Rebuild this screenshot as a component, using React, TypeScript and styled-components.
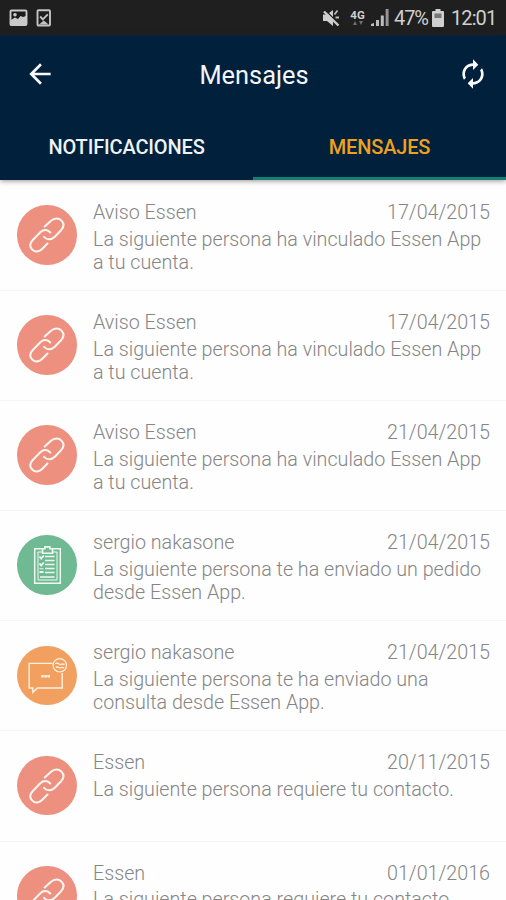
import React from "react";
import styled, { createGlobalStyle } from "styled-components";

const GlobalStyle = createGlobalStyle`
  * { box-sizing: border-box; }
  html, body { margin: 0; background: #fefefe; }
  body { font-family: Roboto, sans-serif; overflow: hidden; }
  svg { display: block; flex: none; }
`;

const Screen = styled.div`
  width: 506px;
  height: 900px;
  overflow: hidden;
  display: flex;
  flex-direction: column;
  background: #fefefe;
`;

const StatusBar = styled.div`
  height: 35px;
  flex: none;
  display: flex;
  align-items: center;
  justify-content: space-between;
  padding: 0 10px 0 9px;
  background: #1f1f1f;
  color: #cfcfcf;
`;

const StatusGroup = styled.div`
  display: flex;
  align-items: center;
`;

const StatusText = styled.span<{ $width: number; $tracking: number }>`
  width: ${(p) => p.$width}px;
  padding-top: 2px;
  font-size: 20px;
  line-height: 33px;
  letter-spacing: ${(p) => p.$tracking}px;
  white-space: nowrap;
`;

const Network = styled.div`
  width: 15px;
  margin: 0 6px 0 10px;
  display: flex;
  flex-direction: column;
  align-items: center;
  font-size: 11.5px;
  font-weight: 700;
  line-height: 10px;
`;

const Header = styled.header`
  height: 145px;
  flex: none;
  display: flex;
  flex-direction: column;
  background: #00203b;
  box-shadow: 0 1px 5px rgba(60, 40, 30, 0.5);
  z-index: 1;
`;

const Toolbar = styled.div`
  height: 79px;
  display: grid;
  grid-template-columns: 80px 1fr 80px;
  align-items: center;
`;

const Title = styled.h1`
  margin: 0;
  padding-left: 2px;
  text-align: center;
  font-size: 25.4px;
  font-weight: 400;
  line-height: 30px;
  color: #f3f5f7;
`;

const IconButton = styled.button<{ $end?: boolean }>`
  border: 0;
  padding: ${(p) => (p.$end ? "0 17px 2px 0" : "0 0 2px 24px")};
  background: none;
  color: #f7f9fb;
  display: flex;
  justify-content: ${(p) => (p.$end ? "flex-end" : "flex-start")};
`;

const Tabs = styled.nav`
  flex: 1;
  display: grid;
  grid-template-columns: 1fr 1fr;
`;

const Tab = styled.button<{ $active?: boolean }>`
  border: 0;
  border-bottom: 3px solid ${(p) => (p.$active ? "#147f76" : "transparent")};
  background: none;
  padding: 3px 0 0;
  font: 500 20px/24px Roboto, sans-serif;
  letter-spacing: -0.15px;
  color: ${(p) => (p.$active ? "#eda022" : "#eff1f3")};
`;

const List = styled.main`
  flex: 1;
  overflow: hidden;
  padding-top: 1px;
`;

const Row = styled.article`
  height: 110.1px;
  display: flex;
  padding: 20px 16px 0 17px;
  gap: 16.5px;
  border-bottom: 1px solid #f6f6f6;
`;

const Avatar = styled.div<{ $color: string }>`
  width: 59.5px;
  height: 59.5px;
  margin-top: 4.2px;
  flex: none;
  border-radius: 50%;
  background: ${(p) => p.$color};
`;

const Content = styled.div`
  flex: 1;
  min-width: 0;
  font-size: 19.7px;
  font-weight: 300;
  color: #858585;
`;

const Meta = styled.div`
  display: flex;
  justify-content: space-between;
  line-height: 24px;
`;

const Message = styled.p`
  margin: 2.6px 0 0;
  line-height: 23px;
  white-space: pre-line;
`;

const BackIcon = () => (
  <svg width="32" height="32" viewBox="0 0 24 24" fill="currentColor">
    <path d="M20 11H7.83l5.59-5.59L12 4l-8 8 8 8 1.41-1.41L7.83 13H20v-2z" />
  </svg>
);

const SyncIcon = () => (
  <svg width="32" height="32" viewBox="0 0 24 24" fill="currentColor">
    <path d="M12 6v3l4-4-4-4v3c-4.42 0-8 3.58-8 8 0 1.57.46 3.03 1.24 4.26L6.7 14.8A5.87 5.87 0 0 1 6 12c0-3.31 2.69-6 6-6zm6.76 1.74L17.3 9.2c.44.84.7 1.79.7 2.8 0 3.31-2.69 6-6 6v-3l-4 4 4 4v-3c4.42 0 8-3.58 8-8 0-1.57-.46-3.03-1.24-4.26z" />
  </svg>
);

const ImageIcon = () => (
  <svg width="19" height="18" viewBox="0 0 19 18">
    <rect x="1.5" y="1.5" width="16" height="14.5" rx="1" fill="#1b1b1b" stroke="#c9c9c9" strokeWidth="1.9" />
    <path d="M2 11 6 8.500l3 1.500 2.500-3 2.500 1 3-1v8H2z" fill="#c9c9c9" />
    <circle cx="6" cy="5.8" r="1.800" fill="#c9c9c9" />
  </svg>
);

const TaskIcon = () => (
  <svg width="16" height="18" viewBox="0 0 16 18" fill="none" stroke="#c4c4c4" strokeWidth="1.900">
    <rect x="1.5" y="1.2" width="12.500" height="15.300" rx="1" />
    <path d="m4.200 7.500 2.600 2.800 5-5" />
    <path d="M3 15.500 7.800 11.500l4.800 4z" fill="#c4c4c4" stroke="none" />
  </svg>
);

const MuteIcon = () => (
  <svg width="18" height="18" viewBox="0 0 18 18">
    <path d="M1 5.500h4l6-4.500v16l-6-5H1z" fill="#cfcfcf" />
    <path d="m12.500 5.500 3-4M13.500 8.500H17" stroke="#bdbdbd" strokeWidth="1.800" />
    <path d="m3.500 1.500 13 13" stroke="#1f1f1f" strokeWidth="1.400" />
    <path d="m2 2.500 14.500 14" stroke="#cfcfcf" strokeWidth="2.400" />
  </svg>
);

const DataArrows = () => (
  <svg width="10" height="6" viewBox="0 0 10 6" fill="#707070">
    <path d="M0 5h4L2 1zM6 1h4L8 5z" />
  </svg>
);

const SignalIcon = () => (
  <svg width="18" height="19" viewBox="0 0 18 19">
    <path d="M0 18v-2l3-1v3zM5 18v-6h3v6zM9.8 18V7.500h3V18z" fill="#bdbdbd" />
    <path d="M14.600 18V1h3v17z" fill="#949494" />
  </svg>
);

const BatteryIcon = () => (
  <svg width="12" height="18" viewBox="0 0 12 18">
    <path d="M3.500 0h5v2H11q1 0 1 1v14q0 1-1 1H1q-1 0-1-1V3q0-1 1-1h2.500z" fill="#d0d0d0" />
    <path d="M2.500 4.500h7V9h-7z" fill="#767676" />
  </svg>
);

const LinkIcon = () => (
  <svg width="60" height="60" viewBox="0 0 60 60" fill="none" stroke="#fff6f2" strokeWidth="2" strokeLinecap="round">
    <path d="M27.700 21.500 34 15.800c3.300-2.800 7.700-3 10.500-.2 2.700 2.800 2.400 6.500-.4 9.600l-6.300 6.500c-3.500 3.300-7.800 3.200-10.800.2" />
    <path d="M33.300 27.500c-2.800-3-6.700-3.300-10-.3l-7.500 7.800c-3 3.200-3.200 6.800-.6 9.500 2.900 2.800 6.700 2.500 9.600-.3l5.700-5.700" />
  </svg>
);

const OrderIcon = () => (
  <svg width="60" height="60" viewBox="0 0 60 60" fill="none" stroke="#effaf3">
    <path d="M25 13.700h-7.300v34.500h25.600V13.700H36" strokeWidth="1.500" />
    <path d="M25 17h-4v28h19V17h-4" strokeWidth="1" />
    <path d="M25.500 18.300v-4.500h2.400v-1.900h5v1.900h2.600v4.500z" strokeWidth="1.600" />
    <path d="M28 21.500h9.500M28 25.500h9.500M28 29.500h9.500M28 33.500h9.500M28 37.500h9.500M23 42h14.500" strokeWidth="1.300" />
    <path d="m22.500 21.500 1.700 2 2.600-3M22.500 28.500l1.700 2 2.600-3M22.500 37h4" strokeWidth="1.800" />
    <path d="M22.500 33.800h4" strokeWidth="1" />
  </svg>
);

const ChatIcon = () => (
  <svg width="60" height="60" viewBox="0 0 60 60" fill="none" stroke="#fff1e2">
    <path d="M35.500 17.400H12.200V42h3.600v4.300L20.500 42h24.700V27" strokeWidth="1.400" />
    <circle cx="42.800" cy="19.300" r="6.700" strokeWidth="1.200" />
    <path d="M38.300 17.800c2-2 4 .8 5 .8s2-1.500 4.200 0M39 21.400c2-1.500 3.400 1 4.600.4s2-.9 3.500.1" strokeWidth="1.300" />
    <path d="M24.200 30.300h2.600M27.300 30.300h2.600M30.400 30.300H33" strokeWidth="2.500" />
  </svg>
);

const kinds = {
  link: { color: "#ed9080", Icon: LinkIcon },
  order: { color: "#6fba92", Icon: OrderIcon },
  chat: { color: "#f1a05f", Icon: ChatIcon },
};

type Item = { kind: keyof typeof kinds; name: string; date: string; text: string };

const linked = "La siguiente persona ha vinculado Essen App\na tu cuenta.";
const contact = "La siguiente persona requiere tu contacto.";

const items: Item[] = [
  { kind: "link", name: "Aviso Essen", date: "17/04/2015", text: linked },
  { kind: "link", name: "Aviso Essen", date: "17/04/2015", text: linked },
  { kind: "link", name: "Aviso Essen", date: "21/04/2015", text: linked },
  { kind: "order", name: "sergio nakasone", date: "21/04/2015", text: "La siguiente persona te ha enviado un pedido\ndesde Essen App." },
  { kind: "chat", name: "sergio nakasone", date: "21/04/2015", text: "La siguiente persona te ha enviado una\nconsulta desde Essen App." },
  { kind: "link", name: "Essen", date: "20/11/2015", text: contact },
  { kind: "link", name: "Essen", date: "01/01/2016", text: contact },
];

const LeftStatus = styled(StatusGroup)`
  gap: 8px;
`;

const Battery = styled.div`
  margin: 0 7px 0 3px;
`;

const Signal = styled.div`
  margin-right: 5px;
`;

export default function App() {
  return (
    <Screen>
      <GlobalStyle />
      <StatusBar>
        <LeftStatus>
          <ImageIcon />
          <TaskIcon />
        </LeftStatus>
        <StatusGroup>
          <MuteIcon />
          <Network>
            4G
            <DataArrows />
          </Network>
          <Signal>
            <SignalIcon />
          </Signal>
          <StatusText $width={35} $tracking={-1.1}>47%</StatusText>
          <Battery>
            <BatteryIcon />
          </Battery>
          <StatusText $width={45} $tracking={-0.9}>12:01</StatusText>
        </StatusGroup>
      </StatusBar>
      <Header>
        <Toolbar>
          <IconButton aria-label="Volver">
            <BackIcon />
          </IconButton>
          <Title>Mensajes</Title>
          <IconButton $end aria-label="Actualizar">
            <SyncIcon />
          </IconButton>
        </Toolbar>
        <Tabs>
          <Tab>NOTIFICACIONES</Tab>
          <Tab $active>MENSAJES</Tab>
        </Tabs>
      </Header>
      <List>
        {items.map((item, i) => {
          const { color, Icon } = kinds[item.kind];
          return (
            <Row key={i}>
              <Avatar $color={color}>
                <Icon />
              </Avatar>
              <Content>
                <Meta>
                  <span>{item.name}</span>
                  <time>{item.date}</time>
                </Meta>
                <Message>{item.text}</Message>
              </Content>
            </Row>
          );
        })}
      </List>
    </Screen>
  );
}
